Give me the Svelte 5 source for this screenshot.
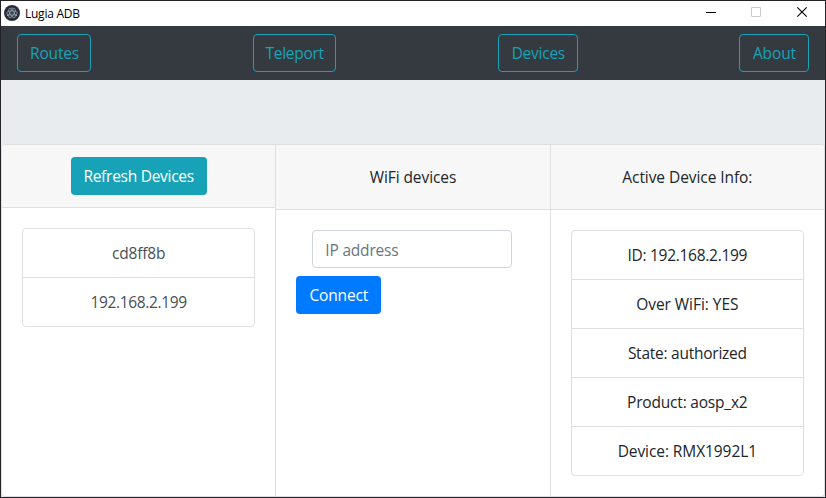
<script>
  const nav = [
    { label: 'Routes', width: 74, spacing: -0.2 },
    { label: 'Teleport', width: 83, spacing: -0.3 },
    { label: 'Devices', width: 80, spacing: -0.25 },
    { label: 'About', width: 70, spacing: -0.1 }
  ];
  const devices = [
    { id: 'cd8ff8b', spacing: -0.2 },
    { id: '192.168.2.199', spacing: -0.35 }
  ];
  const info = [
    { text: 'ID: 192.168.2.199', spacing: -0.28 },
    { text: 'Over WiFi: YES', spacing: -0.05 },
    { text: 'State: authorized', spacing: -0.25 },
    { text: 'Product: aosp_x2', spacing: -0.2 },
    { text: 'Device: RMX1992L1', spacing: -0.08 }
  ];
  let ip = $state('');
</script>

<div class="window">
  <header class="titlebar">
    <svg class="logo" width="16" height="16" viewBox="0 0 16 16">
      <circle cx="8" cy="8" r="8" fill="#2b2e3a" />
      <g fill="none" stroke="#9fb9c4" stroke-width=".65">
        <ellipse cx="8" cy="8" rx="5.2" ry="2.1" />
        <ellipse cx="8" cy="8" rx="5.2" ry="2.1" transform="rotate(60 8 8)" />
        <ellipse cx="8" cy="8" rx="5.2" ry="2.1" transform="rotate(120 8 8)" />
      </g>
      <g fill="#9fb9c4">
        <circle cx="8" cy="8" r=".6" />
        <circle cx="3.6" cy="10.3" r=".7" />
        <circle cx="12.4" cy="10.3" r=".7" />
        <circle cx="8" cy="3" r=".6" />
      </g>
    </svg>
    <span class="title">Lugia ADB</span>
    <svg class="controls" width="103" height="13" viewBox="0 0 103 13" fill="none">
      <path d="M0 6.5h10" stroke="#000" />
      <path d="M45.5 1.5h9v9h-9z" stroke="#ccc" />
      <path d="M91.3 1.3l9.4 9.4M100.7 1.3l-9.4 9.4" stroke="#000" stroke-width="1.1" />
    </svg>
  </header>

  <nav class="navbar">
    {#each nav as item}
      <button class="btn outline" style:width="{item.width}px" style:letter-spacing="{item.spacing}px">{item.label}</button>
    {/each}
  </nav>

  <main class="page">
    <div class="cards">
      <section class="card">
        <div class="head short"><button class="btn info">Refresh Devices</button></div>
        <div class="body">
          <ul class="list action">
            {#each devices as device}
              <li style:letter-spacing="{device.spacing}px">{device.id}</li>
            {/each}
          </ul>
        </div>
      </section>
      <section class="card">
        <div class="head"><span>WiFi devices</span></div>
        <div class="body">
          <input class="ip" placeholder="IP address" bind:value={ip} />
          <button class="btn primary">Connect</button>
        </div>
      </section>
      <section class="card">
        <div class="head"><span>Active Device Info:</span></div>
        <div class="body">
          <ul class="list">
            {#each info as line}
              <li style:letter-spacing="{line.spacing}px">{line.text}</li>
            {/each}
          </ul>
        </div>
      </section>
    </div>
  </main>
</div>

<style>
  :global(body) {
    margin: 0;
  }
  .window,
  .window * {
    box-sizing: border-box;
  }
  .window {
    width: 826px;
    height: 498px;
    border: 1px solid #232327;
    display: flex;
    flex-direction: column;
    overflow: hidden;
    background: #e9ecef;
    color: #212529;
    font: 15.5px/24px 'Open Sans', 'Noto Sans', sans-serif;
    letter-spacing: -0.2px;
  }
  .titlebar {
    flex: none;
    height: 25px;
    padding: 0 16px 0 3px;
    display: flex;
    align-items: center;
    background: #fff;
    color: #000;
  }
  .logo {
    margin-bottom: 1px;
  }
  .controls {
    margin-bottom: 2px;
  }
  .title {
    margin-left: 5px;
    flex: 1;
    font-size: 12px;
    line-height: 24px;
    letter-spacing: -0.25px;
  }
  .navbar {
    flex: none;
    height: 54px;
    padding: 8px 16px;
    background: #343a40;
    display: flex;
    justify-content: space-between;
  }
  .btn {
    height: 38px;
    padding: 0;
    border: 1px solid transparent;
    border-radius: 4px;
    font: inherit;
    letter-spacing: inherit;
    color: #fff;
    white-space: nowrap;
  }
  .outline {
    padding-left: 1px;
    color: #17a2b8;
    border-color: #17a2b8;
    background: transparent;
  }
  .outline:nth-child(3) {
    margin: 0 -0.5px 0 0.5px;
  }
  .info {
    width: 136px;
    background: #17a2b8;
    letter-spacing: -0.27px;
  }
  .primary {
    width: 85px;
    background: #007bff;
    letter-spacing: -0.15px;
  }
  .page {
    flex: 1;
    padding-top: 64px;
    display: flex;
  }
  .cards {
    flex: 1;
    display: flex;
  }
  .card {
    flex: 1 1 0;
    min-width: 0;
    background: #fff;
    border: 1px solid #dfdfdf;
    border-radius: 4px;
    overflow: hidden;
  }
  .card + .card {
    border-left: 0;
  }
  .card:not(:last-child) {
    border-top-right-radius: 0;
    border-bottom-right-radius: 0;
  }
  .card:not(:first-child) {
    border-top-left-radius: 0;
    border-bottom-left-radius: 0;
  }
  .head {
    height: 65px;
    display: flex;
    align-items: center;
    justify-content: center;
    background: #f7f7f7;
    border-bottom: 1px solid #dfdfdf;
  }
  .head span {
    letter-spacing: -0.07px;
  }
  .head.short {
    height: 63px;
  }
  .body {
    padding: 20px;
    display: flex;
    flex-direction: column;
    align-items: flex-start;
    gap: 8px;
  }
  .list {
    width: 100%;
    margin: 0;
    padding: 0;
    list-style: none;
    border: 1px solid #dfdfdf;
    border-radius: 4px;
    text-align: center;
  }
  .list li {
    height: 48px;
    line-height: 48px;
  }
  .list li + li {
    height: 49px;
    border-top: 1px solid #dfdfdf;
  }
  .action {
    color: #495057;
  }
  .ip {
    width: 200px;
    height: 38px;
    margin: 0 0 0 16px;
    padding: 1px 12px 0;
    border: 1px solid #ced4da;
    border-radius: 4px;
    background: #fff;
    font: inherit;
    letter-spacing: inherit;
    outline: none;
  }
  .ip::placeholder {
    color: #6c757d;
    opacity: 1;
  }
</style>
